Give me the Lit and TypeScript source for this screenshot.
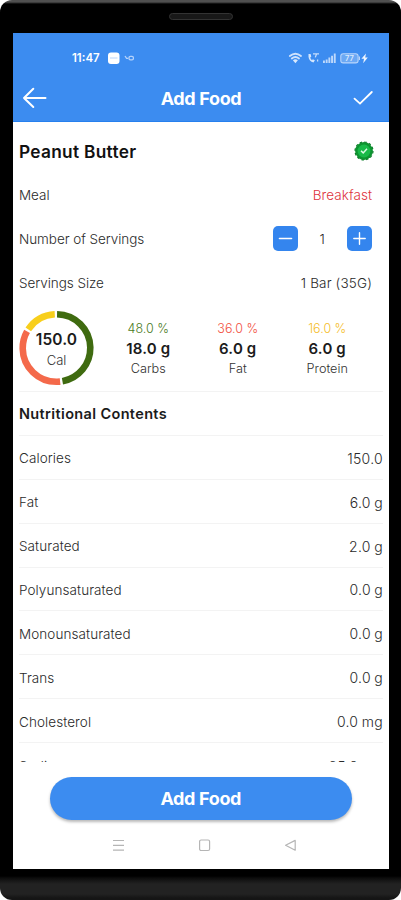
import { LitElement, html, css, svg } from "lit";
import { customElement } from "lit/decorators.js";

const MACROS = [
  { pct: "48.0 %", grams: "18.0 g", name: "Carbs", cls: "carbs", share: 48, color: "#3f6b10" },
  { pct: "36.0 %", grams: "6.0 g", name: "Fat", cls: "fat", share: 36, color: "#f4694a" },
  { pct: "16.0 %", grams: "6.0 g", name: "Protein", cls: "protein", share: 16, color: "#f8cf1c" },
];

const NUTRIENTS = [
  ["Calories", "150.0"],
  ["Fat", "6.0 g"],
  ["Saturated", "2.0 g"],
  ["Polyunsaturated", "0.0 g"],
  ["Monounsaturated", "0.0 g"],
  ["Trans", "0.0 g"],
  ["Cholesterol", "0.0 mg"],
  ["Sodium", "85.0 mg"],
];

@customElement("status-bar")
class StatusBar extends LitElement {
  static styles = css`
    :host { display: flex; align-items: center; height: 16px; padding: 0 19px 0 59px; color: #fff; }
    .time { font: 600 11.5px/16px Inter, sans-serif; width: 35px; white-space: nowrap; }
    .left { flex: 1; display: block; }
    svg { display: block; }
  `;
  render() {
    return html`
      <span class="time">11:47</span>
      <svg class="left" height="16" viewBox="0 0 180 16" preserveAspectRatio="xMinYMid meet">
        <rect x="1" y="2.5" width="11.5" height="11.5" rx="3" fill="#fff" />
        <path d="M3 8h7.5" stroke="#b9d5fb" stroke-width="1" />
        <g fill="none" stroke="#b4d2fb" stroke-width="1.3">
          <path d="M18 6l1.6 2.4h1.6" />
          <rect x="22" y="6.3" width="4.4" height="3.6" rx="1.4" />
        </g>
      </svg>
      <svg width="82" height="16" viewBox="0 0 82 16">
        <g fill="none" stroke="#cfe2fc" stroke-width="1.9" stroke-linecap="round">
          <path d="M1.8 6Q7.4 1.4 13 6" />
          <path d="M3.8 8.4Q7.4 5.4 11 8.4" />
        </g>
        <path d="M4.9 10.2Q7.4 8.3 9.9 10.2L7.4 13.3Z" fill="#d9e9fd" />
        <path d="M22 3.5v2.7c.3 3 2 5 5 5.8l1.4-2.3-2-1-.8.8c-1-.5-1.6-1.5-1.8-2.6l1-.8-.7-2.6z" fill="#d3e5fc" transform="translate(-1.5 .5)" />
        <path d="M25 3.8h6M28.5 4l-1.2 3.4M29.6 9.5v2" stroke="#c3dbfb" stroke-width="1.3" fill="none" />
        <path d="M35 10.5h1.9v2.5H35zM37.7 9.5h1.9V13h-1.9zM40.4 7.6h1.9V13h-1.9zM43.1 5.8H45V13h-1.9zM45.8 3.6h1.9V13h-1.9z" fill="#bdd8fb" />
        <rect x="52.8" y="3.7" width="17.3" height="9.2" rx="2.4" fill="#6ba8f4" stroke="#b9d5fb" stroke-width="1.1" />
        <path d="M71.4 6.5v3.6" stroke="#b9d5fb" stroke-width="1.2" />
        <text x="61.5" y="11.2" text-anchor="middle" font-family="Inter, sans-serif" font-size="7.5" font-weight="600" fill="#dceafd">77</text>
        <path d="M78 3.6l-4.6 5.2h2.6l-.8 4.4 4.6-5.6h-2.6z" fill="#eef5fe" />
      </svg>
    `;
  }
}

@customElement("calorie-ring")
class CalorieRing extends LitElement {
  static styles = css`
    :host { display: grid; width: 75px; height: 76px; place-items: center; }
    svg, .label { grid-area: 1 / 1; }
    .label { text-align: center; font-family: Inter, sans-serif; padding-top: 4px; }
    .kcal { font-size: 15.5px; font-weight: 600; line-height: 20px; color: #1b1b1b; letter-spacing: 0.1px; }
    .unit { font-size: 13px; font-weight: 300; line-height: 20px; color: #333; }
  `;
  render() {
    const r = 33.8;
    const gap = 0.55;
    let start = 0;
    const arcs = MACROS.map((m) => {
      const len = m.share - gap * 2;
      const arc = svg`<circle cx="37.5" cy="38" r=${r} fill="none" stroke=${m.color} stroke-width="6.6"
        pathLength="100" stroke-dasharray="${len} ${100 - len}" stroke-dashoffset=${-(start + gap)}
        transform="rotate(-91 37.5 38)" />`;
      start += m.share;
      return arc;
    });
    return html`
      <svg width="75" height="76" viewBox="0 0 75 76">${arcs}</svg>
      <div class="label">
        <div class="kcal">150.0</div>
        <div class="unit">Cal</div>
      </div>
    `;
  }
}

@customElement("app-root")
class AppRoot extends LitElement {
  static styles = css`
    :host { display: block; width: 401px; height: 900px; background: #fff; font-family: Inter, "Liberation Sans", sans-serif; }
    .phone {
      box-sizing: border-box; height: 900px; padding: 2px 12px 0 13px; border-radius: 12px;
      overflow: hidden; display: flex; flex-direction: column;
      background: linear-gradient(#505050 0 2px, #000 4px 876px, #0c0c0c 878px, #222 884px, #222 894px, #151515 898px);
    }
    .ear { height: 30.5px; flex: none; display: flex; justify-content: center; }
    .speaker { box-sizing: border-box; width: 64px; height: 7px; margin-top: 11px; border-radius: 4px; border: 1px solid #333; background: #181818; }
    .screen { height: 836px; flex: none; background: #fff; display: flex; flex-direction: column; }
    .header { height: 89.5px; flex: none; background: #3c8cf0; box-sizing: border-box; padding-top: 17.5px; box-shadow: inset 0 -1px #2680ee; }
    .bar { display: flex; align-items: center; justify-content: space-between; height: 26px; margin-top: 19px; padding: 0 15px 0 9px; }
    .bar svg { display: block; }
    .title { font-size: 18px; font-weight: 700; color: #fff; letter-spacing: -0.35px; line-height: 26px; margin-left: 2px; padding-top: 2px; }
    .content { height: 639.5px; flex: none; overflow: hidden; }
    .row {
      display: flex; align-items: center; justify-content: space-between; box-sizing: border-box;
      height: 43.87px; padding: 0 17px 0 0; margin-left: 6px;
      font-size: 13.5px; font-weight: 300; color: #2a2a2a; letter-spacing: -0.05px;
    }
    .row.name { height: 51.5px; padding: 7px 15px 0 0; font-size: 17.3px; font-weight: 600; color: #111; letter-spacing: 0.3px; }
    .meal { color: #de3340; letter-spacing: 0.05px; }
    .size { letter-spacing: 0.15px; }
    .stepper { display: flex; align-items: center; gap: 18.5px; }
    .count { width: 12.5px; text-align: center; }
    .btn { width: 25px; height: 25px; border-radius: 5px; background: #3485ee; display: block; margin-top: -1px; }
    .summary { display: flex; align-items: center; height: 87px; margin: 0 6px 0 6px; border-bottom: 1px solid #f3f3f3; box-sizing: border-box; padding-bottom: 1px; }
    .macros { flex: 1; display: grid; grid-template-columns: repeat(3, 89.5px); margin-left: 9.5px; padding-top: 3px; }
    .macro { text-align: center; line-height: 20px; white-space: nowrap; }
    .pct { font-size: 12.5px; font-weight: 300; }
    .carbs { color: #4a7a1c; }
    .fat { color: #f2503e; }
    .protein { color: #f5bd2a; }
    .grams { font-size: 15px; font-weight: 600; color: #1b1b1b; letter-spacing: 0.15px; }
    .mname { font-size: 12.7px; font-weight: 300; color: #333; }
    .list .row { margin-right: 6px; padding-right: 0; border-bottom: 1px solid #f3f3f3; padding-top: 2px; letter-spacing: 0.08px; }
    .list .row .val { font-size: 14px; letter-spacing: 0.3px; word-spacing: -0.8px; }
    .list .row:last-child { padding-top: 4px; }
    .list .row.head { font-size: 14.5px; font-weight: 600; color: #1b1b1b; letter-spacing: 0.36px; padding-top: 0; }
    .action { margin: 15px 0 0 37px; width: 301.5px; height: 43.5px; flex: none; border-radius: 22px; background: #3c8cf0; border: 0; padding: 1px 0 0; color: #fff; font: 700 18px Inter, sans-serif; letter-spacing: -0.35px; box-shadow: 0 2px 3px rgba(0,0,0,.28); }
    .nav { display: flex; margin-top: 17.5px; padding-left: 97.5px; gap: 73px; }
    .nav svg { display: block; }
  `;

  row(label: string, value: unknown) {
    return html`<div class="row"><span>${label}</span>${value}</div>`;
  }

  render() {
    return html`
      <div class="phone">
        <div class="ear"><div class="speaker"></div></div>
        <div class="screen">
          <div class="header">
            <status-bar></status-bar>
            <div class="bar">
              <svg width="26" height="22" viewBox="0 0 26 22" fill="none" stroke="#fff" stroke-width="2" stroke-linecap="round" stroke-linejoin="round"><path d="M23.5 11H2M11.3 1.8L2 11l9.3 9" /></svg>
              <span class="title">Add Food</span>
              <svg width="22" height="18" viewBox="0 0 22 18" fill="none" stroke="#fff" stroke-width="1.8" stroke-linecap="round"><path d="M2.5 9.6l5.5 5L19.8 3" /></svg>
            </div>
          </div>
          <div class="content">
            <div class="row name">
              <span>Peanut Butter</span>
              <svg width="20" height="20" viewBox="-10 -10 20 20">
                <circle r="8.9" fill="#0d9430" />
                <circle r="9" fill="none" stroke="#0b7d28" stroke-width="1.2" stroke-dasharray="2.5 2.21" />
                <circle r="6.4" fill="#18ba48" />
                <path d="M-3 -.2L-.8 1.9L3 -2.2" fill="none" stroke="#d8fbe2" stroke-width="1.5" />
              </svg>
            </div>
            ${this.row("Meal", html`<span class="meal">Breakfast</span>`)}
            ${this.row("Number of Servings", html`
              <span class="stepper">
                <svg class="btn" viewBox="0 0 25 25"><path d="M6.5 12.5h12" stroke="#fff" stroke-width="1.6" stroke-linecap="round" /></svg>
                <span class="count">1</span>
                <svg class="btn" viewBox="0 0 25 25"><path d="M6.8 12.5h11.4M12.5 6.8v11.4" stroke="#fff" stroke-width="1.4" stroke-linecap="round" /></svg>
              </span>`)}
            ${this.row("Servings Size", html`<span class="size">1 Bar (35G)</span>`)}
            <div class="summary">
              <calorie-ring></calorie-ring>
              <div class="macros">
                ${MACROS.map((m) => html`
                  <div class="macro">
                    <div class="pct ${m.cls}">${m.pct}</div>
                    <div class="grams">${m.grams}</div>
                    <div class="mname">${m.name}</div>
                  </div>`)}
              </div>
            </div>
            <div class="list">
              <div class="row head">Nutritional Contents</div>
              ${NUTRIENTS.map(([label, value]) => this.row(label, html`<span class="val">${value}</span>`))}
            </div>
          </div>
          <button class="action">Add Food</button>
          <div class="nav">
            <svg width="14" height="14" viewBox="0 0 14 14" stroke="#b5b5b5" stroke-width="1.2"><path d="M2 2.5h11M2 7.3h11M2 12.2h11" /></svg>
            <svg width="14" height="14" viewBox="0 0 14 14" fill="none" stroke="#b5b5b5" stroke-width="1.2"><rect x="1.6" y="2" width="10" height="10.5" rx="1.5" /></svg>
            <svg width="14" height="14" viewBox="0 0 14 14" fill="none" stroke="#b5b5b5" stroke-width="1.2" stroke-linejoin="round"><path d="M.6 7.2L10.2 2.4v9.8z" /></svg>
          </div>
        </div>
      </div>
    `;
  }
}
